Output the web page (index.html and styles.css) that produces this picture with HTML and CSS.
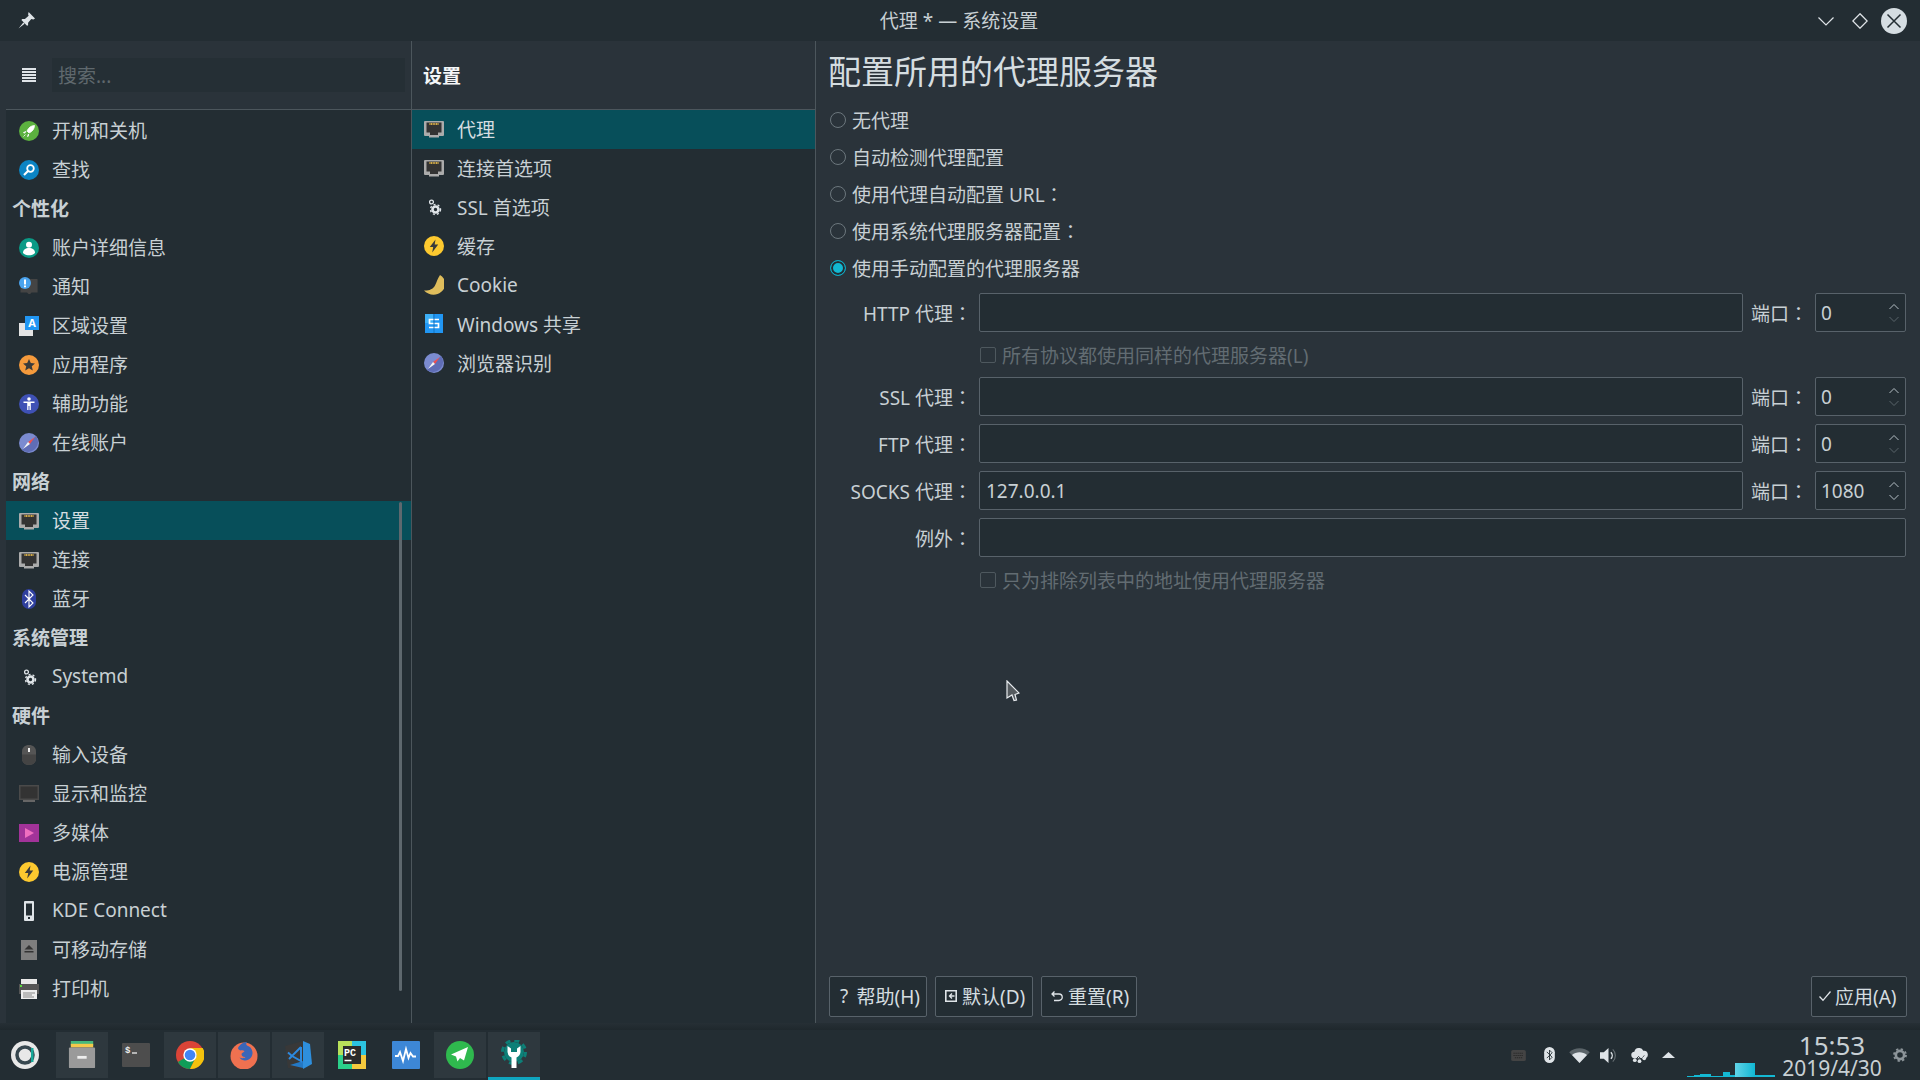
FILE: index.html
```html
<!DOCTYPE html>
<html lang="zh-Hans">
<head>
<meta charset="utf-8">
<title>代理 * — 系统设置</title>
<link rel="stylesheet" href="styles.css">
</head>
<body>
<svg class="defs" width="0" height="0">
  <defs>
    <symbol id="rj45" viewBox="0 0 20 20">
      <path d="M0 3a1 1 0 0 1 1-1h18a1 1 0 0 1 1 1v13a1 1 0 0 1-1 1h-4v1.500H5V17H1a1 1 0 0 1-1-1z" fill="#ababab"/>
      <path d="M2.500 3.500h15v10h-3.500V16H6v-2.500H2.500z" fill="#333"/>
      <path d="M5.500 5h9" stroke="#e5b84a" stroke-width="2" stroke-dasharray="1 .6"/>
    </symbol>
    <symbol id="gears" viewBox="0 0 20 20">
      <circle cx="11.500" cy="12.500" r="3" fill="none" stroke="#dfe4e8" stroke-width="2.600"/>
      <circle cx="11.500" cy="12.500" r="5" fill="none" stroke="#dfe4e8" stroke-width="1.400" stroke-dasharray="2 2.190"/>
      <circle cx="7.500" cy="5" r="1.900" fill="none" stroke="#dfe4e8" stroke-width="1.300"/>
    </symbol>
    <symbol id="bolt" viewBox="0 0 20 20">
      <circle cx="10" cy="10" r="10" fill="#fdc92f"/>
      <path d="M11.500 3.500 5.800 11h3.400l-1 5.500 6-8h-3.500z" fill="#3b3b3b"/>
    </symbol>
    <symbol id="compass" viewBox="0 0 20 20">
      <circle cx="10" cy="10" r="10" fill="#7b8bd0"/>
      <path d="M17 3 3 17a10 10 0 0 0 14-14z" fill="#5f6db6"/>
      <path d="m16 4-5 7-2-2z" fill="#f04f4f"/>
      <path d="m4 16 5-7 2 2z" fill="#f4f4f4"/>
    </symbol>
    <symbol id="spin" viewBox="0 0 12 22">
      <path d="M1.500 7 6 2.500 10.500 7" fill="none" stroke="#b5bfc5" stroke-width="1"/>
      <path d="M1.500 15 6 19.500 10.500 15" fill="none" stroke="currentColor" stroke-width="1"/>
    </symbol>
    <linearGradient id="gr" x1="0" x2="1" y1="0" y2="0">
      <stop offset="0" stop-color="#62d4e8"/>
      <stop offset="1" stop-color="#10b8d4"/>
    </linearGradient>
  </defs>
</svg>

<div class="screen">
  <header class="titlebar">
    <svg class="pin" viewBox="0 0 16 16"><path d="M10 0l6 6-1.500 1-2-.5-3 3.500v2.500l-1 .5-5.300-5.500.8-1 2.500.2 3.500-3.200-.5-1.500zM5 9.800l1.200 1.200-5.700 4.500z" fill="#dfe4e8"/></svg>
    <div class="title">代理 * — 系统设置</div>
    <div class="winbtns">
      <svg class="winbtn" viewBox="0 0 16 16"><path d="M.5 4.500 8 12l7.500-7.500" fill="none" stroke="#dfe4e8" stroke-width="1.200"/></svg>
      <svg class="winbtn" viewBox="0 0 16 16"><path d="M8 .8 15.200 8 8 15.200.8 8z" fill="none" stroke="#dfe4e8" stroke-width="1.300"/></svg>
      <svg class="winclose" viewBox="0 0 26 26"><circle cx="13" cy="13" r="13" fill="#d5dde2"/><path d="M6.500 6.500l13 13M19.500 6.500l-13 13" stroke="#232d33" stroke-width="1.500"/></svg>
    </div>
  </header>

  <main class="window">
    <aside class="sidebar">
      <div class="side-head">
        <svg class="menu" viewBox="0 0 14 14"><path d="M0 1h14M0 4h14M0 7h14M0 10h14M0 13h14" stroke="#dfe4e8" stroke-width="2" shape-rendering="crispEdges"/></svg>
        <div class="search">搜索...</div>
      </div>
      <div class="side-list">
        <div class="row"><svg class="ico" viewBox="0 0 20 20"><circle cx="10" cy="10" r="10" fill="#5cb13f"/><path d="M15.500 4.500c-3.500.2-6 2-7.500 5.500l2 2c3.500-1.500 5.300-4 5.500-7.500zM7 10.500l-2.500 1 .8.800zM9.500 13l-1 2.500.8-.3zM6.500 13.500 4.500 15.500" fill="#fff" stroke="#fff" stroke-width=".8"/></svg><span>开机和关机</span></div>
        <div class="row"><svg class="ico" viewBox="0 0 20 20"><circle cx="10" cy="10" r="10" fill="#0b84c4"/><circle cx="11.500" cy="8.500" r="3.300" fill="none" stroke="#fff" stroke-width="1.800"/><path d="M9 11 5 15" stroke="#fff" stroke-width="2.200"/></svg><span>查找</span></div>
        <div class="group">个性化</div>
        <div class="row"><svg class="ico" viewBox="0 0 20 20"><circle cx="10" cy="10" r="10" fill="#0a9a86"/><circle cx="10" cy="6.800" r="3" fill="#fff"/><path d="M4 15c0-3.500 2.500-5 6-5s6 1.500 6 5c-1.500 1.600-3.500 2.300-6 2.300S5.500 16.600 4 15z" fill="#fff"/></svg><span>账户详细信息</span></div>
        <div class="row"><svg class="ico" viewBox="0 0 20 20"><path d="M2 2h16a.6.6 0 0 1 .600.600v13h-6l-1.500 1.500H9.500L8 15.600H1.500V2.500z" fill="#444"/><circle cx="6" cy="6" r="6" fill="#4aa3ee"/><path d="M5 2.500h2v5H5zM5 8.500h2v1.700H5z" fill="#fff"/></svg><span>通知</span></div>
        <div class="row"><svg class="ico" viewBox="0 0 20 20"><path d="M0 7h14v13H0z" fill="#e3e3e3"/><path d="M6 0h14v14H6z" fill="#2196f3"/><text x="13" y="11" class="icotext">A</text></svg><span>区域设置</span></div>
        <div class="row"><svg class="ico" viewBox="0 0 20 20"><circle cx="10" cy="10" r="10" fill="#f59a3c"/><path d="m10 4 1.800 4 4.200.4-3.200 2.900 1 4.200-3.800-2.200-3.800 2.200 1-4.200L4 8.400 8.200 8z" fill="#3b3b3b"/></svg><span>应用程序</span></div>
        <div class="row"><svg class="ico" viewBox="0 0 20 20"><circle cx="10" cy="10" r="10" fill="#3f51b5"/><circle cx="10" cy="5" r="1.800" fill="#fff"/><path d="M4.500 7.500h11v1.400h-3.700V16h-1.300v-4h-1v4H8.200V8.900H4.500z" fill="#fff"/></svg><span>辅助功能</span></div>
        <div class="row"><svg class="ico"><use href="#compass"/></svg><span>在线账户</span></div>
        <div class="group">网络</div>
        <div class="row on"><svg class="ico"><use href="#rj45"/></svg><span>设置</span></div>
        <div class="row"><svg class="ico"><use href="#rj45"/></svg><span>连接</span></div>
        <div class="row"><svg class="ico" viewBox="0 0 20 20"><rect x="3" y="0" width="14" height="20" rx="7" fill="#2f3f9e"/><path d="m6 6 8 8-4 4V2l4 4-8 8" fill="none" stroke="#fff" stroke-width="1.100"/></svg><span>蓝牙</span></div>
        <div class="group">系统管理</div>
        <div class="row"><svg class="ico"><use href="#gears"/></svg><span>Systemd</span></div>
        <div class="group">硬件</div>
        <div class="row"><svg class="ico" viewBox="0 0 20 20"><path d="M10 0c4 0 7 2.500 7 6.500v7c0 4-3 6.500-7 6.500s-7-2.500-7-6.500v-7C3 2.500 6 0 10 0z" fill="#555"/><path d="M3 9.500h14v4c0 4-3 6.500-7 6.500s-7-2.500-7-6.500z" fill="#444"/><rect x="9" y="3" width="2" height="4" fill="#eee"/></svg><span>输入设备</span></div>
        <div class="row"><svg class="ico" viewBox="0 0 20 20"><path d="M0 1h20v15H0z" fill="#4a4a4a"/><path d="M1.500 2.500h17v12h-17z" fill="#333"/><path d="M4 16h12v2H4z" fill="#666"/></svg><span>显示和监控</span></div>
        <div class="row"><svg class="ico" viewBox="0 0 20 20"><path d="M0 1h20v18H0z" fill="#a23399"/><path d="m6 5 9 5-9 5z" fill="#f06fc0"/></svg><span>多媒体</span></div>
        <div class="row"><svg class="ico"><use href="#bolt"/></svg><span>电源管理</span></div>
        <div class="row"><svg class="ico" viewBox="0 0 20 20"><rect x="5" y="0" width="10" height="20" rx="1" fill="#dfe4e8"/><path d="M7 2.500h6v12H7z" fill="#232d33"/><rect x="9" y="16" width="2" height="2" fill="#232d33"/></svg><span>KDE Connect</span></div>
        <div class="row"><svg class="ico" viewBox="0 0 20 20"><path d="M2 0h16v20H2z" fill="#7e7e7e"/><path d="m10 5 4.500 4.500h-9zM5.500 11h9v1.400h-9z" fill="#333"/></svg><span>可移动存储</span></div>
        <div class="row"><svg class="ico" viewBox="0 0 20 20"><path d="M2 0h16v5H2z" fill="#e8e8e8"/><path d="M0 5h20v10H0z" fill="#555"/><path d="M2 11h16v9H2z" fill="#eee"/><path d="M1 6h2v2H1z" fill="#5bdc3c"/><path d="M4 14h12M4 16h9M4 18h11" stroke="#888"/></svg><span>打印机</span></div>
        <div class="scrollbar"></div>
      </div>
    </aside>

    <section class="pages">
      <div class="pages-head">设置</div>
      <div class="pages-list">
        <div class="prow on"><svg class="ico"><use href="#rj45"/></svg><span>代理</span></div>
        <div class="prow"><svg class="ico"><use href="#rj45"/></svg><span>连接首选项</span></div>
        <div class="prow"><svg class="ico"><use href="#gears"/></svg><span>SSL 首选项</span></div>
        <div class="prow"><svg class="ico"><use href="#bolt"/></svg><span>缓存</span></div>
        <div class="prow"><svg class="ico" viewBox="0 0 20 20"><path d="M16 0a10 10 0 0 1 1 17c-5 4.500-13 3-17-1.500 4 .5 9-1 11-5 1.800-3.500 2.500-7 5-10.500z" fill="#dfbd5c"/></svg><span>Cookie</span></div>
        <div class="prow"><svg class="ico" viewBox="0 0 20 20"><path d="M1 0h18v19H1z" fill="#2196f3"/><path d="M1 0h8v9H1z" fill="#3db0f7"/><path d="M15 5.500H5.500v4h9v4H5" fill="none" stroke="#fff" stroke-width="1.700"/><path d="M10 0v19" stroke="#1673bd"/></svg><span>Windows 共享</span></div>
        <div class="prow"><svg class="ico"><use href="#compass"/></svg><span>浏览器识别</span></div>
      </div>
    </section>

    <section class="content">
      <h1 class="heading">配置所用的代理服务器</h1>
      <div class="radios">
        <div class="radio"><i class="dot"></i><span>无代理</span></div>
        <div class="radio"><i class="dot"></i><span>自动检测代理配置</span></div>
        <div class="radio"><i class="dot"></i><span>使用代理自动配置 URL<b class="tc" lang="zh-TW">：</b></span></div>
        <div class="radio"><i class="dot"></i><span>使用系统代理服务器配置<b class="tc" lang="zh-TW">：</b></span></div>
        <div class="radio"><i class="dot sel"></i><span>使用手动配置的代理服务器</span></div>
      </div>
      <div class="form">
        <div class="frow"><label class="flabel"><span>HTTP 代理<b class="tc" lang="zh-TW">：</b></span></label><div class="input"></div><label class="plabel"><span>端口<b class="tc" lang="zh-TW">：</b></span></label><div class="port"><span>0</span><svg class="spin"><use href="#spin"/></svg></div></div>
        <div class="check"><i class="box"></i><span>所有协议都使用同样的代理服务器(L)</span></div>
        <div class="frow"><label class="flabel"><span>SSL 代理<b class="tc" lang="zh-TW">：</b></span></label><div class="input"></div><label class="plabel"><span>端口<b class="tc" lang="zh-TW">：</b></span></label><div class="port"><span>0</span><svg class="spin"><use href="#spin"/></svg></div></div>
        <div class="frow"><label class="flabel"><span>FTP 代理<b class="tc" lang="zh-TW">：</b></span></label><div class="input"></div><label class="plabel"><span>端口<b class="tc" lang="zh-TW">：</b></span></label><div class="port"><span>0</span><svg class="spin"><use href="#spin"/></svg></div></div>
        <div class="frow"><label class="flabel"><span>SOCKS 代理<b class="tc" lang="zh-TW">：</b></span></label><div class="input">127.0.0.1</div><label class="plabel"><span>端口<b class="tc" lang="zh-TW">：</b></span></label><div class="port"><span>1080</span><svg class="spin act"><use href="#spin"/></svg></div></div>
        <div class="frow"><label class="flabel"><span>例外<b class="tc" lang="zh-TW">：</b></span></label><div class="input"></div></div>
        <div class="check"><i class="box"></i><span>只为排除列表中的地址使用代理服务器</span></div>
      </div>
      <div class="actions">
        <div class="btn"><span class="q">?</span>帮助(H)</div>
        <div class="btn"><svg class="bi" viewBox="0 0 12 12"><path d="M.8.800h10.400v10.400H.8z" fill="none" stroke="#dfe4e8" stroke-width="1.600"/><path d="M9.500 6H5M7 3.500 4.500 6 7 8.500" fill="none" stroke="#dfe4e8" stroke-width="1.400"/></svg>默认(D)</div>
        <div class="btn"><svg class="bi" viewBox="0 0 12 12"><path d="M3.500 1.500 1 4l2.500 2.500M1.500 4H8a3 3 0 0 1 0 6.500H3" fill="none" stroke="#dfe4e8" stroke-width="1.300"/></svg>重置(R)</div>
        <div class="btn apply"><svg class="bi" viewBox="0 0 12 12"><path d="m.5 6.500 3.500 3.800L11.500 1.500" fill="none" stroke="#dfe4e8" stroke-width="1.300"/></svg>应用(A)</div>
      </div>
    </section>
  </main>

  <div class="shade"></div>

  <footer class="taskbar">
    <div class="launcher"><svg viewBox="0 0 28 28"><circle cx="14" cy="14" r="14" fill="#e8e8e8"/><circle cx="14" cy="14" r="8" fill="none" stroke="#37474f" stroke-width="3.500"/><path d="M20 7h2.500v14H20z" fill="#18a999"/></svg></div>
    <div class="tasks">
      <div class="task lit"><svg viewBox="0 0 28 30"><path d="M2 0h24v5H2z" fill="#45b87c"/><path d="M2 3h24v4H2z" fill="#f5c84b"/><rect y="7" width="28" height="22" rx="1" fill="#9a9a9a"/><path d="M9 16h10v3H9z" fill="#eee"/></svg></div>
      <div class="task"><svg viewBox="0 0 28 24"><rect width="28" height="24" rx="1" fill="#4d4d4d"/><text x="3" y="10" class="termtext">$</text><path d="M10 10h5" stroke="#eee" stroke-width="1.300"/></svg></div>
      <div class="task lit"><svg viewBox="0 0 28 28"><circle cx="14" cy="14" r="14" fill="#db4437"/><path d="M14 14 1.900 21 A14 14 0 0 0 14 28 l7-14z" fill="#0f9d58"/><path d="M14 7h12.700A14 14 0 0 1 14 28l7-14z" fill="#f4c20d"/><circle cx="14" cy="14" r="6.700" fill="#fff"/><circle cx="14" cy="14" r="5.300" fill="#4285f4"/></svg></div>
      <div class="task lit"><svg viewBox="0 0 28 28"><circle cx="14" cy="15" r="13.500" fill="#ef7150"/><path d="M8 7c2-4 6-6 9-6-1 1.500-1 2.500 0 3.500 3 1 5 3 5.500 6.500.5 5-3.500 9-8 8.500-2.500-.3-4-1.500-5-3 2 1 5 1 6-.5-2 .5-4-1-4-3 0-1 3-2 3-3-1-.5-3-1-4-.5-1.500-.5-2.500-1.500-2.500-2.500z" fill="#3a66b8"/></svg></div>
      <div class="task lit"><svg viewBox="0 0 28 28"><path d="M1 5 19 0v28L4 27z" fill="#383838"/><path d="M19 0l7 3 2 20-9 5z" fill="#2e8fdd"/><path d="M6 24l13-4v7z" fill="#2478c4"/><path d="M17 6 8 15l-4-3.500M8 15l-3 3M17 6v14L8 15" fill="none" stroke="#2c8ae0" stroke-width="2"/></svg></div>
      <div class="task"><svg viewBox="0 0 28 28"><path d="M0 0h14v14H0z" fill="#b8e05a"/><path d="M14 0h14v14H14z" fill="#2cc3e0"/><path d="M14 14h14v14H14z" fill="#f5c93d"/><path d="M0 14h14v14H0z" fill="#2bd08a"/><path d="M5 5h18v18H5z" fill="#2b2b2b"/><text x="6" y="15" class="pctext">PC</text><path d="M6.500 19.500h7" stroke="#fff" stroke-width="1.500"/></svg></div>
      <div class="task"><svg viewBox="0 0 28 28"><rect width="28" height="28" rx="1" fill="#3d87d6"/><path d="M3 15h3l2-4 3 9 3-12 2.500 9 2-5 2.500 3.500H24" fill="none" stroke="#fff" stroke-width="1.800"/></svg></div>
      <div class="task lit"><svg viewBox="0 0 28 28"><circle cx="14" cy="14" r="14" fill="#2fb94e"/><path d="m22 6-17 7.500 5 2 1.500 5 2.500-3.500 4 2.500z" fill="#fff"/></svg></div>
      <div class="task lit active"><svg viewBox="0 0 28 30"><circle cx="14" cy="12" r="10" fill="#0d7f77"/><circle cx="14" cy="12" r="11.500" fill="none" stroke="#0d7f77" stroke-width="3" stroke-dasharray="5 4.030"/><path d="M7.500 6v6a6.500 6.500 0 0 0 4 5.500V28h5V17.500a6.500 6.500 0 0 0 4-5.500V6L17 8.500V12h-6V8.500z" fill="#fff"/></svg></div>
    </div>
    <div class="tray">
      <svg class="t-kbd" viewBox="0 0 16 12"><rect width="16" height="12" rx="2" fill="#444"/><path d="M2.500 3.500h11M2.500 6h11M4 8.500h8" stroke="#282828" stroke-width="1.200" stroke-dasharray="1.400 .8"/></svg>
      <svg class="t-bt" viewBox="0 0 12 18"><rect width="12" height="18" rx="6" fill="#dfe4e8"/><path d="M3 5.500l6 6-3 3V3.500l3 3-6 6" fill="none" stroke="#232d33" stroke-width="1"/></svg>
      <svg class="t-wifi" viewBox="0 0 22 16"><path d="M0 4.500C6-1.300 16-1.300 22 4.500L11 16z" fill="#dfe4e8" opacity=".3"/><path d="M3 7.500C7.500 3.500 14.500 3.500 19 7.500L11 16z" fill="#dfe4e8"/></svg>
      <svg class="t-vol" viewBox="0 0 18 18"><path d="M0 5.500h4L9 1v16l-5-4.500H0z" fill="#dfe4e8"/><path d="M11.500 5.500a5 5 0 0 1 0 7" fill="none" stroke="#dfe4e8" stroke-width="1.500"/><path d="M13.500 2.500a9 9 0 0 1 0 13" fill="none" stroke="#dfe4e8" stroke-width="1.200" opacity=".35"/></svg>
      <svg class="t-cloud" viewBox="0 0 18 16"><path d="M4 11a3.500 3.500 0 0 1-.5-7A5 5 0 0 1 13 3a4 4 0 0 1 1.500 8z" fill="#dfe4e8"/><path d="M4 13l4-4 3 3 3-4" fill="none" stroke="#232d33" stroke-width="1"/><circle cx="4" cy="13" r="2" fill="#dfe4e8"/><circle cx="9" cy="14" r="2" fill="#dfe4e8"/><circle cx="14" cy="11" r="2" fill="#dfe4e8"/></svg>
      <svg class="t-up" viewBox="0 0 13 6"><path d="M0 6 6.500 0 13 6z" fill="#dfe4e8"/></svg>
      <svg class="t-graph" viewBox="0 0 88 14"><path d="M0 14v-1h7v-1h6v-1h11v2h12v-4h7v3h5V0h20v12h20v2z" fill="#14b9d4"/><path d="M48 0h20v14H48z" fill="url(#gr)"/></svg>
      <div class="clock"><div class="time">15:53</div><div class="date">2019/4/30</div></div>
      <svg class="t-gear" viewBox="0 0 16 16"><circle cx="8" cy="8" r="4.700" fill="none" stroke="#8c9499" stroke-width="3"/><circle cx="8" cy="8" r="6.800" fill="none" stroke="#8c9499" stroke-width="2.200" stroke-dasharray="2.600 2.740"/></svg>
    </div>
  </footer>

  <svg class="cursor" viewBox="0 0 14 22"><path d="M1 1 13 13l-4 1.500L10.500 20 8 20.500 6 15l-5 3z" fill="#555b5f" stroke="#e8ecef" stroke-width="1.200"/></svg>
</div>
</body>
</html>
```
FILE: styles.css
```css
* { box-sizing: border-box; }
html, body { margin: 0; height: 100%; }
body {
  font-family: "Noto Sans", "Noto Sans CJK SC", sans-serif;
  font-size: 19px;
  color: #c8d0d4;
  background: #232d33;
  overflow: hidden;
}
.defs { position: absolute; }
.tc { font-family: "Noto Sans CJK TC", sans-serif; font-weight: 400; }
.screen { width: 1920px; height: 1080px; display: flex; flex-direction: column; position: relative; }

.titlebar { height: 41px; flex: none; display: grid; grid-template-columns: 1fr auto 1fr; align-items: center; background: #232d33; padding: 0 13px; }
.pin { width: 17px; height: 17px; margin-left: 5px; }
.title { font-size: 19px; color: #c8d0d4; padding: 0 2px 2px 0; }
.winbtns { display: flex; align-items: center; justify-content: flex-end; gap: 18px; }
.winbtn { width: 16px; height: 16px; }
.winclose { width: 26px; height: 26px; margin-left: -5px; }

.window { flex: none; height: 982px; display: flex; background: #2a333a; }
.sidebar { width: 411px; flex: none; display: flex; flex-direction: column; }
.side-head { height: 68px; flex: none; display: flex; align-items: center; padding: 0 6px 0 22px; }
.menu { width: 14px; height: 14px; flex: none; }
.search { margin-left: 16px; flex: 1; height: 34px; background: #252f35; color: #5f686d; padding-left: 6px; line-height: 36px; }
.side-list { margin-left: 6px; flex: 1; border-top: 1px solid #4c565c; padding-top: 1px; background: #232d33; position: relative; }
.row, .prow, .group { height: 39px; display: flex; align-items: center; }
.row { padding-left: 13px; }
.row span { margin-left: 13px; padding-bottom: 1px; white-space: nowrap; }
.group { padding: 0 0 1px 6px; font-weight: 700; }
.row.on, .prow.on { background: #074f5a; }
.row.on span, .prow.on span { color: #d5dde0; }
.ico { width: 20px; height: 20px; flex: none; }
.icotext { font: 700 11px "Noto Sans", sans-serif; fill: #fff; text-anchor: middle; }
.termtext { font: 700 9px "Liberation Mono", monospace; fill: #eee; }
.pctext { font: 700 10px "Liberation Mono", monospace; fill: #fff; }
.scrollbar { position: absolute; right: 9px; top: 392px; width: 3px; height: 489px; border-radius: 2px; background: #5e686e; }

.pages { width: 405px; flex: none; display: flex; flex-direction: column; border-left: 1px solid #4c565c; border-right: 1px solid #4c565c; }
.pages-head { height: 68px; flex: none; display: flex; align-items: center; padding-left: 11px; font-weight: 700; color: #f4f6f7; }
.pages-list { flex: 1; border-top: 1px solid #4c565c; background: #232d33; }
.prow { padding: 0 0 2px 12px; }
.prow span { margin-left: 13px; white-space: nowrap; }

.content { flex: 1; min-width: 0; padding: 0 14px 6px 13px; display: flex; flex-direction: column; }
.heading { margin: 0 0 0 -1px; height: 58px; flex: none; display: flex; align-items: center; font-size: 33px; font-weight: 400; color: #d5dde0; }
.radios { margin-top: 2px; display: flex; flex-direction: column; }
.radio { height: 37px; display: flex; align-items: center; }
.radio span { margin-left: 6px; }
.dot { width: 16px; height: 16px; margin-left: 1px; border-radius: 50%; border: 1px solid #6c777d; }
.dot.sel { border-color: #0fa6c0; background: #12b8d2; box-shadow: inset 0 0 0 2px #232d33; }

.form { margin-top: 7px; display: flex; flex-direction: column; }
.frow { height: 39px; display: flex; align-items: stretch; margin-bottom: 8px; }
.frow > label { display: flex; align-items: center; white-space: nowrap; }
.flabel { width: 150px; padding-right: 7px; justify-content: flex-end; flex: none; }
.input { flex: 1; border: 1px solid #58626a; border-radius: 2px; background: #232d33; padding-left: 6px; display: flex; align-items: center; min-width: 0; }
.plabel { width: 72px; padding-left: 8px; flex: none; }
.port { width: 91px; flex: none; border: 1px solid #58626a; border-radius: 2px; background: #232d33; padding: 0 5px; display: flex; align-items: center; justify-content: space-between; }
.spin { width: 12px; height: 22px; color: #59646a; }
.spin.act { color: #b5bfc5; }
.check { height: 45px; margin-top: -8px; padding-left: 151px; display: flex; align-items: center; color: #626c72; }
.box { width: 16px; height: 16px; border: 1px solid #4e585e; border-radius: 2px; }
.check span { margin-left: 6px; }

.actions { margin: auto -1px 0 0; display: flex; gap: 8px; }
.btn { height: 41px; display: flex; align-items: center; padding: 0 6px 2px; border: 1px solid #58626a; border-radius: 2px; background: #232d33; color: #d5dde0; white-space: nowrap; }
.btn:nth-child(1) { width: 98px; }
.btn:nth-child(2) { width: 98px; }
.btn:nth-child(3) { width: 96px; }
.apply { margin-left: auto; width: 96px; }
.q { width: 16px; margin-left: 4px; margin-right: 3px; text-align: left; }
.bi { width: 12px; height: 12px; margin-right: 5px; flex: none; margin-left: 3px; }
.apply .bi { margin-left: 1px; margin-right: 4px; }

.shade { height: 7px; flex: none; background: linear-gradient(#262f35, #1f282d); }
.taskbar { height: 50px; flex: none; display: flex; align-items: flex-start; background: #232d33; padding-top: 2px; }
.launcher { width: 56px; height: 46px; padding-left: 11px; display: flex; align-items: center; flex: none; }
.launcher svg { width: 28px; height: 28px; }
.tasks { display: flex; gap: 2px; }
.task { width: 52px; height: 46px; display: flex; align-items: center; justify-content: center; position: relative; }
.task svg { width: 28px; height: 28px; }
.task:nth-child(2) svg { height: 24px; }
.task.lit { background: #2e383e; }
.task.active svg { width: 28px; height: 30px; }
.task.active::after { content: ""; position: absolute; left: 0; right: 0; bottom: -2px; height: 3px; background: #0fa6c0; }
.tray { margin-left: auto; display: flex; align-items: center; height: 46px; padding-right: 13px; }
.t-kbd { width: 15px; height: 11px; margin-right: 18px; }
.t-bt { width: 11px; height: 16px; margin-right: 14px; }
.t-wifi { width: 21px; height: 15px; margin-right: 10px; }
.t-vol { width: 17px; height: 17px; margin-right: 14px; }
.t-cloud { width: 17px; height: 15px; margin-right: 14px; }
.t-up { width: 13px; height: 6px; margin-right: 12px; }
.t-graph { width: 88px; height: 14px; align-self: flex-end; margin-bottom: 1px; }
.clock { width: 114px; align-self: flex-start; margin-top: 2px; text-align: center; color: #c8d0d4; }
.time { font-size: 26px; line-height: 22px; }
.date { font-size: 21px; line-height: 24px; }
.t-gear { width: 14px; height: 14px; margin-left: 4px; }
.cursor { position: absolute; left: 1006px; top: 680px; width: 14px; height: 22px; }
```
